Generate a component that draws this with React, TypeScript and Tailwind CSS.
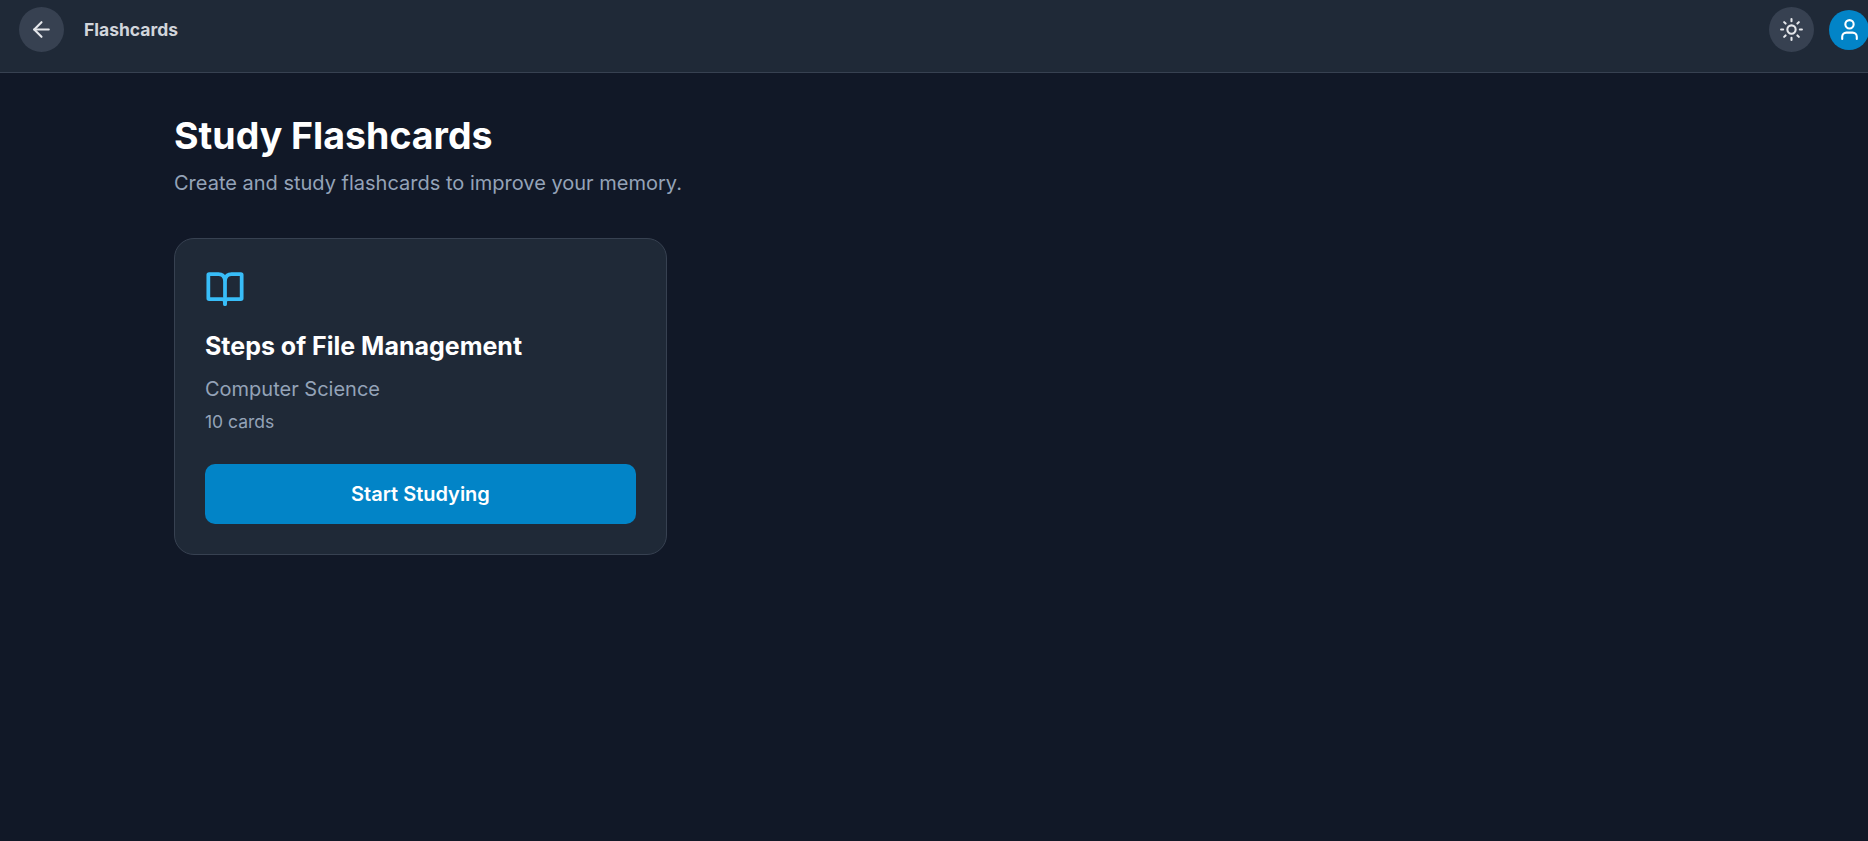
import { ArrowLeft, Sun, User } from "lucide-react";

function Book() {
  return (
    <svg width="40" height="40" viewBox="0 0 24 24" fill="none" stroke="#38bdf8" strokeWidth="2.25" strokeLinecap="round" strokeLinejoin="round">
      <path d="M12 6.500V21" />
      <path d="M2.500 3H8c2 0 3.600 1.200 4 3.500C12.400 4.200 14 3 16 3h5.500a.5.5 0 0 1 .5.5V17.500a.5.5 0 0 1-.5.5H13.500c-.9 0-1.500 1-1.500 3 0-2-.6-3-1.500-3H2.500a.5.5 0 0 1-.5-.5V3.500a.5.5 0 0 1 .5-.5z" />
    </svg>
  );
}

export default function App() {
  return (
    <div className="min-h-[841px] w-full overflow-hidden bg-[#111827] font-['Inter',sans-serif]">
      <header className="flex h-[73px] items-start justify-between border-b border-[#374151] bg-[#1f2937] pl-[19px] pt-[7px]">
        <div className="flex h-[45px] items-center gap-5">
          <button className="flex h-[45px] w-[45px] items-center justify-center rounded-full bg-[#374151] text-[#e5e7eb]">
            <ArrowLeft size={25} strokeWidth={2} />
          </button>
          <h1 className="pt-px text-[17.5px] font-bold text-[#d1d5db]">Flashcards</h1>
        </div>
        <div className="flex h-[45px] items-center gap-[15px]">
          <button className="flex h-[45px] w-[45px] items-center justify-center rounded-full bg-[#374151] text-[#e5e7eb]">
            <Sun size={25} strokeWidth={2} />
          </button>
          <div className="-mr-px flex h-10 w-10 items-center justify-center rounded-full bg-[#0284c7] text-white">
            <User size={25} strokeWidth={2} />
          </div>
        </div>
      </header>
      <main className="pl-[174px] pt-10">
        <h2 className="text-[37.5px] leading-[45px] font-bold text-white">Study Flashcards</h2>
        <p className="mt-[10px] text-[20px] leading-[30px] text-[#94a3b8]">Create and study flashcards to improve your memory.</p>
        <div className="mt-10 flex w-[493px] flex-col rounded-[20px] border border-[#374151] bg-[#1f2937] p-[30px]">
          <Book />
          <h3 className="mt-5 text-[25px] leading-[35px] font-bold text-white">Steps of File Management</h3>
          <p className="mt-[10px] text-[20px] leading-[30px] text-[#94a3b8]">Computer Science</p>
          <p className="mt-[5px] text-[17.5px] leading-[25px] text-[#94a3b8]">10 cards</p>
          <button className="mt-[30px] flex h-[60px] w-full items-center justify-center rounded-[10px] bg-[#0284c7] text-[20px] font-semibold text-white">
            Start Studying
          </button>
        </div>
      </main>
    </div>
  );
}
